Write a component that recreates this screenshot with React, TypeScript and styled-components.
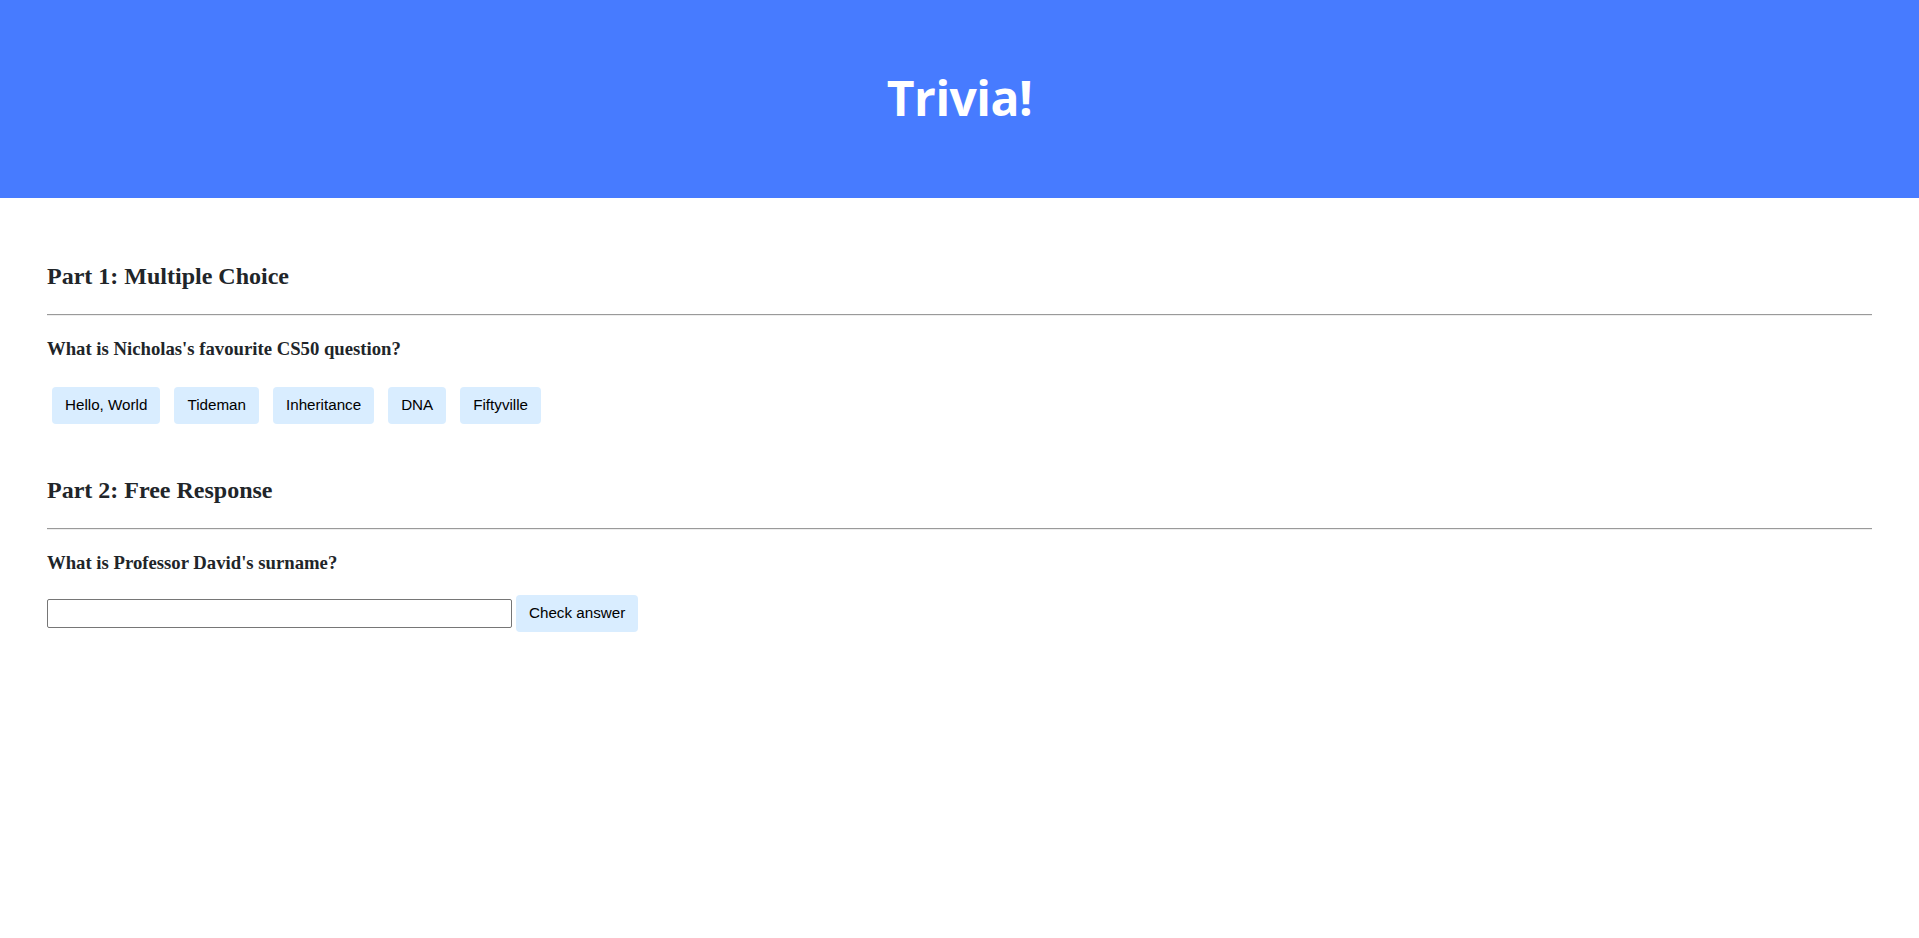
import React from "react";
import styled, { createGlobalStyle } from "styled-components";

const GlobalStyle = createGlobalStyle`
  html, body {
    margin: 0;
    padding: 0;
    background: #ffffff;
  }
  body {
    color: #212529;
    font-family: "Liberation Serif", "Times New Roman", serif;
    font-size: 16px;
    font-weight: 400;
    line-height: 1.5;
  }
`;

const Header = styled.header`
  background-color: #477bff;
  color: #ffffff;
  margin-bottom: 32px;
  padding: 32px 16px;
  text-align: center;
`;

const Title = styled.h1`
  font-family: "Open Sans", "Noto Sans", sans-serif;
  font-weight: 700;
  font-size: 48px;
  line-height: 72px;
  margin: 30px 0 32px;
  letter-spacing: -0.5px;
`;

const Container = styled.main`
  padding: 0 15px;
`;

const Section = styled.section`
  padding: 8px 32px 16px 32px;
`;

const SectionTitle = styled.h2`
  font-size: 24px;
  font-weight: 700;
  line-height: 36px;
  margin: 19.92px 0;
`;

const Rule = styled.hr`
  border: 0;
  border-top: 1px solid #9a9a9a;
  border-bottom: 1px solid #eeeeee;
  height: 0;
  margin: 8px 0;
`;

const Question = styled.h3`
  font-size: 18.72px;
  font-weight: 700;
  line-height: 28px;
  margin: 18.72px 0;
`;

const Choices = styled.div`
  display: flex;
  align-items: center;
  gap: 14px;
  padding-left: 5px;
`;

const Button = styled.button<{ $spaced?: boolean }>`
  background-color: #d9edff;
  border: 1px solid transparent;
  border-radius: 4px;
  color: #000000;
  font-family: "Liberation Sans", Arial, sans-serif;
  font-size: 15.2px;
  font-weight: 400;
  line-height: 1.5;
  padding: 6px 12px;
  text-align: center;
  vertical-align: middle;
  margin: ${(p) => (p.$spaced ? "6px 0 4px" : "0")};
  cursor: pointer;
`;

const AnswerRow = styled.div`
  display: flex;
  align-items: center;
  gap: 4px;
`;

const TextInput = styled.input`
  box-sizing: border-box;
  width: 465px;
  height: 29px;
  border: 1px solid #767676;
  border-radius: 2px;
  padding: 1px 2px;
  font-family: "Liberation Sans", Arial, sans-serif;
  font-size: 13.33px;
  line-height: 1.8;
  background: #ffffff;
`;

const choices = ["Hello, World", "Tideman", "Inheritance", "DNA", "Fiftyville"];

export default function App() {
  return (
    <>
      <GlobalStyle />
      <Header>
        <Title>Trivia!</Title>
      </Header>
      <Container>
        <Section>
          <SectionTitle>Part 1: Multiple Choice</SectionTitle>
          <Rule />
          <Question>What is Nicholas's favourite CS50 question?</Question>
          <Choices>
            {choices.map((c) => (
              <Button key={c} $spaced>
                {c}
              </Button>
            ))}
          </Choices>
        </Section>
        <Section>
          <SectionTitle>Part 2: Free Response</SectionTitle>
          <Rule />
          <Question>What is Professor David's surname?</Question>
          <AnswerRow>
            <TextInput type="text" />
            <Button>Check answer</Button>
          </AnswerRow>
        </Section>
      </Container>
    </>
  );
}
